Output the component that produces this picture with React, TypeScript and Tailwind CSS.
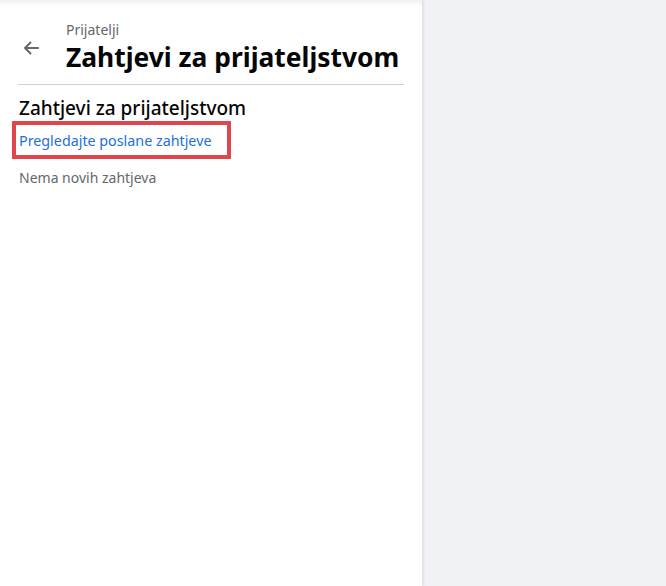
import React from "react";

export default function App() {
  return (
    <div
      className="flex h-[586px] w-[666px] overflow-hidden bg-[#f0f2f5]"
      style={{ fontFamily: '"Noto Sans", "Open Sans", sans-serif' }}
    >
      <div className="relative flex w-[422px] shrink-0 flex-col bg-white shadow-[1px_0_3px_rgba(0,0,0,0.12)]">
        <div className="pointer-events-none absolute inset-x-0 top-0 h-[6px] bg-gradient-to-b from-[rgba(0,0,0,0.06)] to-transparent" />
        <div className="mx-[18px] flex items-center border-b border-[#ced0d4] pb-[10px] pt-[20px]">
          <div className="flex h-[28px] w-[28px] items-center justify-center self-end mb-[12px] ml-[-1px]">
            <svg width="20" height="20" viewBox="0 0 20 20" fill="none">
              <path d="M17 10H4M9.5 4.5L4 10l5.5 5.5" stroke="#65676b" strokeWidth="2" strokeLinecap="round" strokeLinejoin="round" />
            </svg>
          </div>
          <div className="ml-[21px] flex flex-col">
            <span className="text-[14px] leading-[20px] text-[#65676b]">Prijatelji</span>
            <span className="text-[26.4px] font-bold leading-[34px] text-[#050505]">Zahtjevi za prijateljstvom</span>
          </div>
        </div>
        <div className="flex flex-col px-[19px] pt-[11px]">
          <span className="text-[19px] font-medium leading-[24px] text-[#050505]">Zahtjevi za prijateljstvom</span>
          <div className="ml-[-7px] mt-[1px] w-[219px] border-4 border-[#e0464b] px-[3px] py-[3px]">
            <span className="text-[14.3px] leading-[20px] text-[#216fdb]">Pregledajte poslane zahtjeve</span>
          </div>
          <span className="mt-[9px] text-[14px] leading-[20px] text-[#65676b]">Nema novih zahtjeva</span>
        </div>
      </div>
      <div className="flex-1" />
    </div>
  );
}
